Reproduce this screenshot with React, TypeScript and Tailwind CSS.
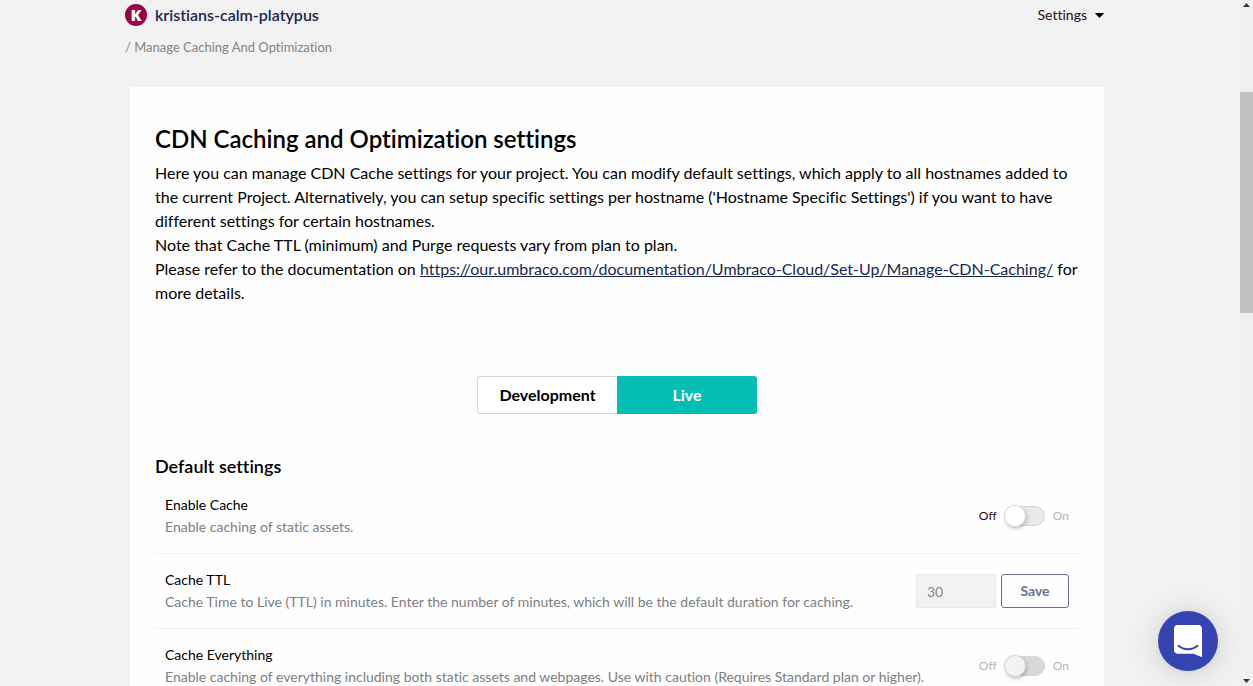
import type { ReactNode } from "react";

const rowClass =
  "flex items-center justify-between gap-4 border-b border-[#f0f0f0] px-2.5 py-[15px] text-sm leading-[22px]";

function SettingRow({ id, title, description, children }: { id: string; title: string; description: string; children: ReactNode }) {
  return (
    <div className={rowClass}>
      <div>
        <label htmlFor={id} className="block">{title}</label>
        <p className="text-[#7d8083]">{description}</p>
      </div>
      {children}
    </div>
  );
}

function Toggle({ id, disabled = false }: { id: string; disabled?: boolean }) {
  return (
    <div className="flex shrink-0 items-center gap-2 text-xs text-[#b3b6b6]">
      <span className={disabled ? "" : "text-[#1b0a12]"}>Off</span>
      <span className="relative flex">
        <input
          id={id}
          type="checkbox"
          role="switch"
          disabled={disabled}
          className={
            disabled
              ? "peer h-5 w-10 appearance-none rounded-full border border-[#d6d6d8] bg-[#d8d8d9]"
              : "peer h-5 w-10 appearance-none rounded-full border border-[#d6d6d9] bg-[#e9e9eb] checked:bg-[#04beb4]"
          }
        />
        <span
          className={
            disabled
              ? "pointer-events-none absolute top-0 left-0 size-5 rounded-full bg-[#f2f2f2] shadow-[1px_2px_4px_rgba(40,40,70,0.4)] ring-1 ring-[#d5d5d8]"
              : "pointer-events-none absolute top-0 left-0 size-5 rounded-full bg-white shadow-[1px_2px_4px_rgba(40,40,70,0.4)] ring-1 ring-[#dedee1] peer-checked:translate-x-5"
          }
        />
      </span>
      <span>On</span>
    </div>
  );
}

export default function App() {
  return (
    <div className="flex h-screen overflow-hidden bg-[#f2f2f2] font-['Lato',sans-serif] text-black [font-variant-ligatures:none]">
      <div className="min-w-0 flex-1 pr-[136px] pl-[125px]">
        <header className="flex items-center justify-between pt-[3px]">
          <a href="#project" className="flex items-center gap-2 text-base leading-6 font-semibold text-[#1b264f]">
            <span className="flex size-[22px] items-center justify-center rounded-full bg-[#9b0048] font-['Open_Sans',sans-serif] text-base leading-none font-extrabold text-white">
              K
            </span>
            kristians-calm-platypus
          </a>
          <button type="button" className="flex items-center gap-2 text-sm leading-6 text-[#1b0a20]">
            Settings
            <svg width="9" height="5" viewBox="0 0 9 5" className="fill-black" aria-hidden="true">
              <path d="M0.5 0h8Q9.3 0 8.6 .8L5 4.6Q4.5 5.1 4 4.6L.4 .8Q-.3 0 .5 0Z" />
            </svg>
          </button>
        </header>
        <nav aria-label="Breadcrumb" className="mt-[9px] text-[13px] leading-[22px] text-[#85828a]">
          / Manage Caching And Optimization
        </nav>

        <main className="mt-[29px] ml-[5px] min-h-screen bg-[#fefefe] px-[25px] pt-9">
          <h1 className="text-2xl leading-8 font-semibold">CDN Caching and Optimization settings</h1>
          <div className="mt-1.5 text-base leading-6">
            <p>
              Here you can manage CDN Cache settings for your project. You can modify default settings, which apply to
              all hostnames added to the current Project. Alternatively, you can setup specific settings per hostname
              ('Hostname Specific Settings') if you want to have different settings for certain hostnames.
            </p>
            <p>Note that Cache TTL (minimum) and Purge requests vary from plan to plan.</p>
            <p>
              Please refer to the documentation on{" "}
              <a
                href="https://our.umbraco.com/documentation/Umbraco-Cloud/Set-Up/Manage-CDN-Caching/"
                className="text-[#1b264f] underline"
              >
                https://our.umbraco.com/documentation/Umbraco-Cloud/Set-Up/Manage-CDN-Caching/
              </a>{" "}
              for more details.
            </p>
          </div>

          <div className="mt-[71px] flex justify-center text-base font-bold">
            <button type="button" className="h-[38px] w-[140px] rounded-l-[3px] border border-r-0 border-[#d5d6d9] bg-white">
              Development
            </button>
            <button type="button" className="h-[38px] w-[140px] rounded-r-[3px] bg-[#04beb4] text-white">
              Live
            </button>
          </div>

          <h2 className="mt-10 mb-px text-lg leading-6 font-semibold">Default settings</h2>
          <SettingRow id="enable-cache" title="Enable Cache" description="Enable caching of static assets.">
            <Toggle id="enable-cache" />
          </SettingRow>
          <SettingRow
            id="cache-ttl"
            title="Cache TTL"
            description="Cache Time to Live (TTL) in minutes. Enter the number of minutes, which will be the default duration for caching."
          >
            <div className="flex shrink-0 gap-[5px]">
              <input
                id="cache-ttl"
                type="text"
                defaultValue="30"
                disabled
                className="h-[34px] w-20 border border-[#e8e8e8] bg-[#f2f2f2] px-2.5 text-sm text-[#85888c]"
              />
              <button
                type="button"
                className="h-[34px] w-[68px] rounded-[3px] border border-[#68709b] text-sm font-bold text-[#68738f]"
              >
                Save
              </button>
            </div>
          </SettingRow>
          <SettingRow
            id="cache-everything"
            title="Cache Everything"
            description="Enable caching of everything including both static assets and webpages. Use with caution (Requires Standard plan or higher)."
          >
            <Toggle id="cache-everything" disabled />
          </SettingRow>
        </main>
      </div>

      <div className="flex w-[13px] shrink-0 flex-col items-center justify-between bg-[#f0f0f0] py-[3px]" aria-hidden="true">
        <svg width="7" height="4" viewBox="0 0 7 4" className="fill-[#49265a]">
          <path d="M3.5 0L7 4H0Z" />
        </svg>
        <div className="mt-[85px] h-[221px] w-full bg-[#c1c1c1]" />
        <div className="flex-1" />
        <svg width="7" height="4" viewBox="0 0 7 4" className="fill-[#49265a]">
          <path d="M0 0H7L3.5 4Z" />
        </svg>
      </div>

      <button
        type="button"
        aria-label="Open chat"
        className="fixed right-[35px] bottom-[15px] flex size-[60px] items-center justify-center rounded-full bg-[#3544b1] shadow-[0_1px_6px_rgba(0,0,0,0.06),0_2px_32px_rgba(0,0,0,0.16)]"
      >
        <svg width="28" height="32" viewBox="0 0 28 32" aria-hidden="true">
          <path
            fill="white"
            d="M28 32s-4.714-1.855-8.527-3.34H3.437C1.54 28.66 0 27.026 0 25.013V3.644C0 1.633 1.54 0 3.437 0h21.125c1.898 0 3.437 1.632 3.437 3.645v18.404H28V32z"
          />
          <path d="M4.5 20.8c5.4 4.6 13.6 4.6 19 0" fill="none" stroke="#3544b1" strokeWidth="2" strokeLinecap="round" />
        </svg>
      </button>
    </div>
  );
}
